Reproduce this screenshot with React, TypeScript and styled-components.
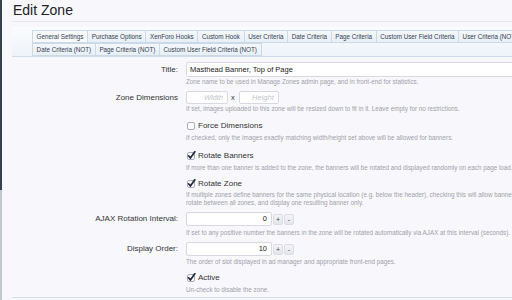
import React from "react";
import styled, { createGlobalStyle } from "styled-components";

const Global = createGlobalStyle`
  html, body { margin: 0; padding: 0; background: #f8f8fc; overflow: hidden; }
  body { font-family: "Liberation Sans", Arial, sans-serif; color: #333; }
  * { box-sizing: border-box; }
`;

const Frame = styled.div`
  display: flex;
  width: 512px;
  height: 300px;
  overflow: hidden;
`;

const Edge = styled.div`
  flex: 0 0 2px;
  background: linear-gradient(to bottom, #34434f 0, #34434f 190px, #c3c8cd 190px, #c3c8cd 100%);
`;

const Main = styled.div`
  flex: 1;
  min-width: 0;
  display: flex;
  flex-direction: column;
`;

const Heading = styled.h1`
  margin: 0 0 0 10px;
  height: 22px;
  padding: 0 0 0 1px;
  font-size: 14px;
  line-height: 20px;
  font-weight: normal;
  color: #222;
  border-bottom: 1px solid #e6e8ee;
  white-space: nowrap;
`;

const TabsArea = styled.div`
  margin: 5px 0 0 10px;
  padding: 3px 0 0 20px;
  background: linear-gradient(to bottom, #fbfcfe 0%, #eef3f9 100%);
  border-bottom: 1px solid #cfdce9;
  display: flex;
  flex-direction: column;
`;

const TabRow = styled.div`
  display: flex;
  height: 13px;
  white-space: nowrap;
`;

const Tab = styled.div<{ $active?: boolean; $first?: boolean }>`
  flex: 0 0 auto;
  height: 13px;
  padding: 0 3.6px;
  border: 1px solid #ccd9e6;
  border-left-width: ${(p) => (p.$first ? 1 : 0)}px;
  background: ${(p) => (p.$active ? "#f7f9fc" : "linear-gradient(to bottom, #f4f7fb, #e8eff7)")};
  color: #35424f;
  font-size: 6.3px;
  line-height: 11px;
`;

const Form = styled.div`
  padding-top: 5px;
  display: flex;
  flex-direction: column;
`;

const Row = styled.div<{ $mt?: number }>`
  display: grid;
  grid-template-columns: 176px 1fr;
  column-gap: 8px;
  margin-top: ${(p) => p.$mt ?? 0}px;
`;

const Label = styled.div<{ $h: number }>`
  text-align: right;
  font-size: 8px;
  line-height: ${(p) => p.$h}px;
  color: #333;
  white-space: nowrap;
`;

const Cell = styled.div`
  min-width: 0;
  display: flex;
  flex-direction: column;
`;

const Line = styled.div`
  display: flex;
  align-items: center;
  white-space: nowrap;
`;

const TextBox = styled.div<{ $w: number; $h: number; $align?: string; $muted?: boolean }>`
  flex: 0 0 auto;
  width: ${(p) => p.$w}px;
  height: ${(p) => p.$h}px;
  border: 1px solid #d8d9e0;
  border-radius: 2px;
  background: #fff;
  padding: 0 ${(p) => (p.$align === "right" ? 4 : 3)}px;
  font-size: 7.5px;
  line-height: ${(p) => p.$h - 2}px;
  text-align: ${(p) => p.$align ?? "left"};
  color: ${(p) => (p.$muted ? "#c4c4cc" : "#222")};
  font-style: ${(p) => (p.$muted ? "italic" : "normal")};
  white-space: nowrap;
  overflow: hidden;
`;

const Times = styled.span`
  font-size: 7.5px;
  color: #333;
  margin: 0 4px 0 3px;
`;

const StepBtn = styled.div`
  flex: 0 0 auto;
  width: 10px;
  height: 11px;
  margin-left: 1px;
  border: 1px solid #dcdde4;
  border-radius: 2px;
  background: linear-gradient(to bottom, #f4f4f8, #e4e5ec);
  font-size: 7px;
  line-height: 9px;
  text-align: center;
  color: #444;
`;

const Hint = styled.div<{ $mt?: number; $lh?: number }>`
  margin-top: ${(p) => p.$mt ?? 0}px;
  font-size: 6.3px;
  line-height: ${(p) => p.$lh ?? 9}px;
  color: #a0a0a8;
  white-space: nowrap;
`;

const CheckLine = styled.label`
  display: flex;
  align-items: center;
  height: 13px;
  font-size: 8px;
  color: #333;
  white-space: nowrap;
  gap: 2px;
`;

const BottomRule = styled.div`
  margin: 3px 0 0 10px;
  border-top: 1px solid #d3e2ea;
`;

const Box = ({ checked }: { checked?: boolean }) => (
  <svg width="9" height="9" viewBox="0 0 9 9" style={{ marginLeft: 1 }}>
    <rect x="0.5" y="1.5" width="7" height="7" rx="1.5" fill="#fff" stroke="#a9acb6" />
    {checked && (
      <path d="M1.6 4.8 L3.4 7 L7.8 0.8" fill="none" stroke="#1f2a3a" strokeWidth="1.7" strokeLinecap="round" strokeLinejoin="round" />
    )}
  </svg>
);

const row1 = [
  "General Settings",
  "Purchase Options",
  "XenForo Hooks",
  "Custom Hook",
  "User Criteria",
  "Date Criteria",
  "Page Criteria",
  "Custom User Field Criteria",
  "User Criteria (NOT)",
];
const row2 = ["Date Criteria (NOT)", "Page Criteria (NOT)", "Custom User Field Criteria (NOT)"];

export default function App() {
  return (
    <>
      <Global />
      <Frame>
        <Edge />
        <Main>
          <Heading>Edit Zone</Heading>
          <TabsArea>
            <TabRow>
              {row1.map((t, i) => (
                <Tab key={t} $first={i === 0} $active={i === 0}>
                  {t}
                </Tab>
              ))}
            </TabRow>
            <TabRow>
              {row2.map((t, i) => (
                <Tab key={t} $first={i === 0}>
                  {t}
                </Tab>
              ))}
            </TabRow>
          </TabsArea>
          <Form>
            <Row>
              <Label $h={15}>Title:</Label>
              <Cell>
                <TextBox $w={340} $h={15}>Masthead Banner, Top of Page</TextBox>
                <Hint>Zone name to be used in Manage Zones admin page, and in front-end for statistics.</Hint>
              </Cell>
            </Row>
            <Row $mt={5}>
              <Label $h={13}>Zone Dimensions</Label>
              <Cell>
                <Line>
                  <TextBox $w={42} $h={13} $align="right" $muted>Width</TextBox>
                  <Times>x</Times>
                  <TextBox $w={40} $h={13} $align="right" $muted>Height</TextBox>
                </Line>
                <Hint>If set, images uploaded to this zone will be resized down to fit in it. Leave empty for no restrictions.</Hint>
              </Cell>
            </Row>
            <Row $mt={6}>
              <Label $h={13} />
              <Cell>
                <CheckLine><Box />Force Dimensions</CheckLine>
                <Hint $mt={1}>If checked, only the images exactly matching width/height set above will be allowed for banners.</Hint>
              </Cell>
            </Row>
            <Row $mt={7}>
              <Label $h={13} />
              <Cell>
                <CheckLine><Box checked />Rotate Banners</CheckLine>
                <Hint $mt={1}>If more than one banner is added to the zone, the banners will be rotated and displayed randomly on each page load.</Hint>
              </Cell>
            </Row>
            <Row $mt={5}>
              <Label $h={13} />
              <Cell>
                <CheckLine><Box checked />Rotate Zone</CheckLine>
                <Hint $mt={1} $lh={8}>
                  If multiple zones define banners for the same physical location (e.g. below the header), checking this will allow banners to
                  <br />
                  rotate between all zones, and display one resulting banner only.
                </Hint>
              </Cell>
            </Row>
            <Row $mt={5}>
              <Label $h={14}>AJAX Rotation Interval:</Label>
              <Cell>
                <Line>
                  <TextBox $w={86} $h={14} $align="right">0</TextBox>
                  <StepBtn>+</StepBtn>
                  <StepBtn>-</StepBtn>
                </Line>
                <Hint $mt={2}>If set to any positive number the banners in the zone will be rotated automatically via AJAX at this interval (seconds).</Hint>
              </Cell>
            </Row>
            <Row $mt={5}>
              <Label $h={14}>Display Order:</Label>
              <Cell>
                <Line>
                  <TextBox $w={86} $h={14} $align="right">10</TextBox>
                  <StepBtn>+</StepBtn>
                  <StepBtn>-</StepBtn>
                </Line>
                <Hint $mt={1}>The order of slot displayed in ad manager and appropriate front-end pages.</Hint>
              </Cell>
            </Row>
            <Row $mt={5}>
              <Label $h={13} />
              <Cell>
                <CheckLine><Box checked />Active</CheckLine>
                <Hint $mt={1}>Un-check to disable the zone.</Hint>
              </Cell>
            </Row>
            <BottomRule />
          </Form>
        </Main>
      </Frame>
    </>
  );
}
